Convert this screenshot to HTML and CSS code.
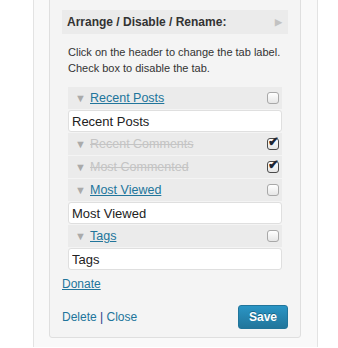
FILE: index.html
```html
<!DOCTYPE html>
<html lang="en">
<head>
    <meta charset="UTF-8">
    <meta name="viewport" content="width=device-width, initial-scale=1.0">
    <title>Tabbed Widget</title>
    <link rel="stylesheet" href="styles.css">
</head>
<body>
    <div class="sidebar">
        <div class="widget-panel">
            <div class="section-head">
                <span>Arrange / Disable / Rename:</span>
                <span class="head-arrow">&#9654;</span>
            </div>
            <p class="hint">Click on the header to change the tab label.<br>Check box to disable the tab.</p>

            <ul class="tab-list">
                <li class="tab-item">
                    <div class="tab-head">
                        <span class="tri">&#9660;</span>
                        <a href="#" class="tab-name">Recent Posts</a>
                        <input type="checkbox" class="tab-check">
                    </div>
                    <input type="text" class="tab-label" value="Recent Posts">
                </li>
                <li class="tab-item disabled">
                    <div class="tab-head">
                        <span class="tri">&#9660;</span>
                        <span class="tab-name">Recent Comments</span>
                        <input type="checkbox" class="tab-check" checked>
                    </div>
                </li>
                <li class="tab-item disabled">
                    <div class="tab-head">
                        <span class="tri">&#9660;</span>
                        <span class="tab-name">Most Commented</span>
                        <input type="checkbox" class="tab-check" checked>
                    </div>
                </li>
                <li class="tab-item">
                    <div class="tab-head">
                        <span class="tri">&#9660;</span>
                        <a href="#" class="tab-name">Most Viewed</a>
                        <input type="checkbox" class="tab-check">
                    </div>
                    <input type="text" class="tab-label" value="Most Viewed">
                </li>
                <li class="tab-item">
                    <div class="tab-head">
                        <span class="tri">&#9660;</span>
                        <a href="#" class="tab-name">Tags</a>
                        <input type="checkbox" class="tab-check">
                    </div>
                    <input type="text" class="tab-label" value="Tags">
                </li>
            </ul>

            <a href="#" class="donate">Donate</a>

            <div class="widget-actions">
                <div class="links">
                    <a href="#">Delete</a> <span class="sep">|</span> <a href="#">Close</a>
                </div>
                <button type="button" class="save-btn">Save</button>
            </div>
        </div>
    </div>
</body>
</html>
```

FILE: styles.css
```css
body {
    margin: 0;
    background: #fff;
    font-family: "Liberation Sans", Arial, sans-serif;
    color: #333;
    height: 348px;
    overflow: hidden;
}

.sidebar {
    margin-left: 33px;
    width: 283px;
    height: 348px;
    background: #f9f9f9;
    border-left: 1px solid #e3e3e3;
    border-right: 1px solid #e3e3e3;
}

.widget-panel {
    margin-left: 15px;
    width: 252px;
    height: 339px;
    margin-top: -1px;
    box-sizing: border-box;
    padding: 10px 12px 0 12px;
    background: #f4f4f4;
    border: 1px solid #dfdfdf;
    border-radius: 0 0 3px 3px;
}

.section-head {
    display: flex;
    justify-content: space-between;
    align-items: center;
    height: 24px;
    padding: 0 6px 0 5px;
    background: #ebebeb;
    font-size: 12px;
    font-weight: bold;
    color: #333;
}

.head-arrow {
    font-size: 9px;
    color: #c2c2c2;
}

.hint {
    margin: 10px 0 0 6px;
    font-size: 11px;
    line-height: 16px;
    color: #333;
}

.tab-list {
    list-style: none;
    margin: 11px 6px 0 6px;
    padding: 0;
}

.tab-head {
    display: flex;
    align-items: center;
    height: 22px;
    margin-bottom: 1px;
    padding: 0 3px 0 7px;
    background: #ebebeb;
}

.tri {
    font-size: 11px;
    color: #aaa;
    width: 15px;
}

.tab-name {
    flex: 1;
    font-size: 12.5px;
    color: #21759b;
    text-decoration: underline;
}

.disabled .tab-name {
    color: #c4c4c4;
    text-decoration: line-through;
}

.tab-check {
    appearance: none;
    position: relative;
    margin: 0;
    width: 12px;
    height: 12px;
    border: 1px solid #a8a8a8;
    border-radius: 3px;
    background: linear-gradient(#fff, #e6e6e6);
}

.tab-check:checked {
    border-color: #4a4a4a;
}

.tab-check:checked::before {
    content: "\2714";
    position: absolute;
    left: 0;
    top: -5px;
    font-size: 13px;
    font-weight: bold;
    color: #1f2633;
}

.tab-label {
    display: block;
    width: 100%;
    height: 22px;
    box-sizing: border-box;
    margin: 0 0 1px 0;
    padding: 0 3px;
    border: 1px solid #dfdfdf;
    border-radius: 3px;
    background: #fff;
    font-family: "Liberation Sans", Arial, sans-serif;
    font-size: 13px;
    color: #222;
}

.donate {
    display: inline-block;
    margin-top: 6px;
    font-size: 12px;
    color: #21759b;
    text-decoration: underline;
}

.widget-actions {
    display: flex;
    justify-content: space-between;
    align-items: center;
    margin-top: 13px;
}

.links {
    font-size: 12px;
}

.links a {
    color: #21759b;
    text-decoration: none;
}

.sep {
    color: #1a3c8a;
}

.save-btn {
    width: 50px;
    height: 24px;
    padding: 0;
    border: 1px solid #21759b;
    border-radius: 3px;
    background: linear-gradient(#2a95c5, #21759b);
    color: #fff;
    font-family: "Liberation Sans", Arial, sans-serif;
    font-size: 12px;
    font-weight: bold;
    text-shadow: 0 -1px 0 rgba(0, 0, 0, 0.3);
}
```
